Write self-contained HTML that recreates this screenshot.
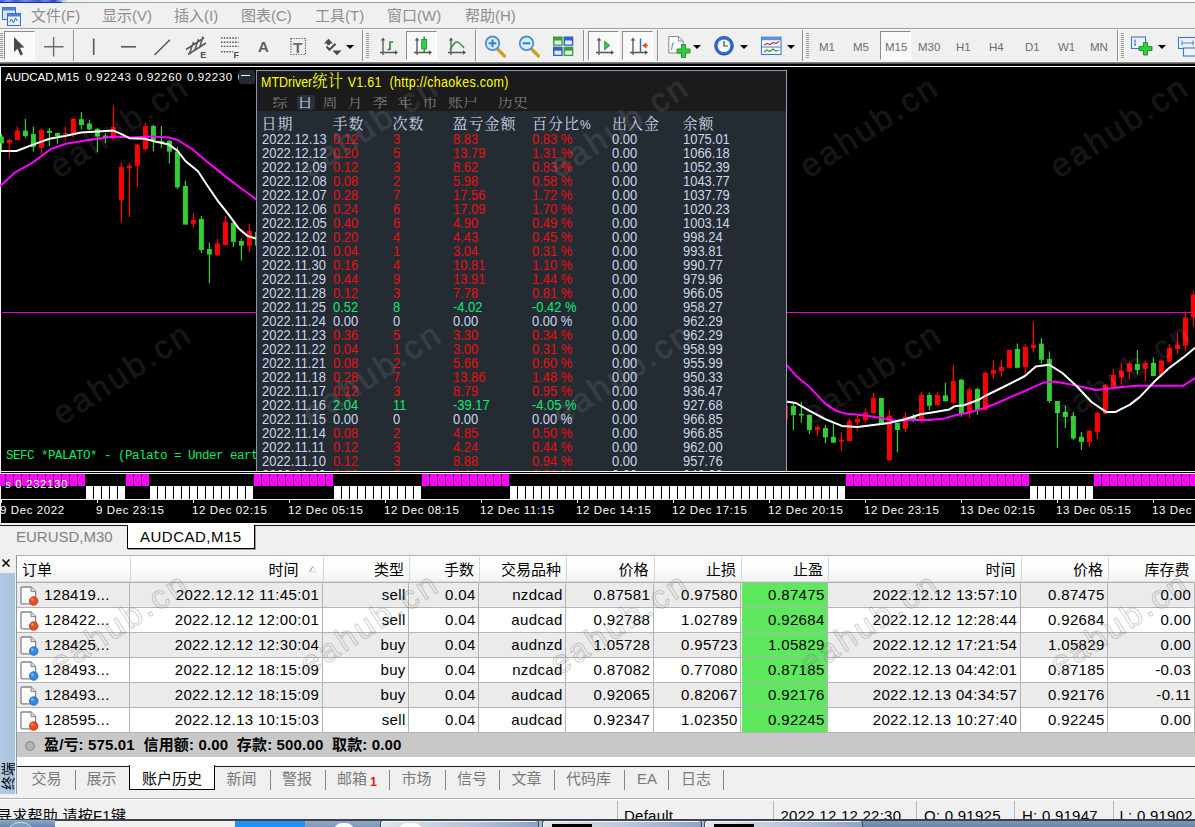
<!DOCTYPE html>
<html lang="zh-CN"><head><meta charset="utf-8"><title>MT4</title>
<style>
*{margin:0;padding:0;box-sizing:border-box}
html,body{width:1195px;height:827px;overflow:hidden;background:#f0f0f0}
body{position:relative;font-family:"Liberation Sans","Noto Sans CJK SC",sans-serif;color:#000}
.abs{position:absolute}
.ui{font-family:"Liberation Sans","Noto Sans CJK SC",sans-serif}
#titlestrip{left:0;top:0;width:1195px;height:3px;background:linear-gradient(90deg,#3a5ad4 0,#7d98ec 8px,#3c5cd6 16px,#6f8ce8 26px,#3a5ad4 38px,#6a88e6 46px,#2a46c4 54px,#a8c0f2 62px,#e6f5f9 68px,#f3fafc 200px,#f6fbfd)}
#menubar{left:0;top:3px;width:1195px;height:25px;background:#f0f0f0}
#menubar span{position:absolute;top:2px;font-size:15px;line-height:22px;color:#8e8e8e;white-space:nowrap}
#menuline{left:0;top:28px;width:1195px;height:1px;background:#a0a0a0}
#toolbar{left:0;top:29px;width:1195px;height:33px;background:#f0f0f0;box-shadow:inset 0 1px 0 #fafafa}
.tsep{position:absolute;top:1px;width:1px;height:31px;background:#8e8e8e;box-shadow:1px 0 0 #fbfbfb}
.grip{position:absolute;top:4px;width:3px;height:26px;background:repeating-linear-gradient(to bottom,#9a9a9a 0,#9a9a9a 1px,#f0f0f0 1px,#f0f0f0 2px)}
.pressed{position:absolute;top:2px;height:29px;background:#f9f9f9;border-top:1px solid #8c8c8c;border-left:1px solid #8c8c8c;border-right:1px solid #fff;border-bottom:1px solid #fff}
.tf{position:absolute;top:11px;font-size:11.5px;line-height:14px;color:#6e6e6e;white-space:nowrap}
.dd{position:absolute;top:16px;width:0;height:0;border-left:4px solid transparent;border-right:4px solid transparent;border-top:4px solid #000}
#tbshadow{left:0;top:62px;width:1195px;height:2px;background:linear-gradient(#9a9a9a,#404040)}
#chart{left:0;top:64px;width:1195px;height:459px;background:#000;overflow:hidden}
.wm{position:absolute;font-size:33px;line-height:34px;letter-spacing:2.9px;-webkit-text-stroke:.55px #fff;color:#fff;opacity:.088;transform:rotate(-33deg);transform-origin:left bottom;white-space:nowrap;font-family:"Liberation Sans",sans-serif;pointer-events:none}
.wml{position:absolute;font-size:33px;line-height:34px;letter-spacing:2.9px;color:transparent;-webkit-text-stroke:1.1px rgba(100,100,100,.3);transform:rotate(-33deg);transform-origin:left bottom;white-space:nowrap;font-family:"Liberation Sans",sans-serif;pointer-events:none}
.ct{font-family:"Liberation Sans",sans-serif;font-size:11.5px;line-height:14px;color:#fff;white-space:nowrap}.ls{letter-spacing:.6px}
#sefc{font-family:"Liberation Mono",monospace;font-size:12.5px;letter-spacing:-0.5px;line-height:16px;color:#00f064;white-space:nowrap}
#panel{left:256px;top:6px;width:531px;height:401px;background:#252b33;border-left:1px solid #8596b0;border-right:1px solid #8fa0b8;overflow:hidden;font-family:"Liberation Sans","Noto Serif CJK SC",sans-serif}
.cj{font-family:"Noto Serif CJK SC",serif;font-size:17px;line-height:18px;letter-spacing:.8px}
.ptitle{font-size:14px;line-height:18px;transform:scaleX(.89);transform-origin:left center;color:#ffff00;white-space:nowrap}
.ptab{position:absolute;top:-5.2px;font-family:"Noto Serif CJK SC",serif;font-size:15px;line-height:18px;color:#7c7c7c;white-space:nowrap}
.ptab.sel{color:#cfdcf2}
.phdr{position:absolute;top:43.6px;font-family:"Noto Serif CJK SC","Liberation Sans",serif;font-size:15px;letter-spacing:1px;line-height:18px;color:#c9d6ec;white-space:nowrap}
.prow{position:absolute;left:0;width:529px;height:14px}
.prow span{position:absolute;top:0;font-size:14px;line-height:14px;white-space:nowrap;transform:scaleX(.925);transform-origin:left center}
.prow .w{color:#c9d6ec}.prow .r{color:#e81010}.prow .g{color:#10e878}
#ctabs{left:0;top:523px;width:1195px;height:32px;background:#f0f0f0}
.ctab{top:4px;font-size:15px;line-height:20px;white-space:nowrap}
#term{left:0;top:555px;width:1195px;height:239px;background:#f0f0f0}
.vtxt{left:-6.5px;top:214px;width:28px;height:14px;font-size:14px;line-height:14px;color:#000;transform:rotate(-90deg);white-space:nowrap;text-align:center;overflow:hidden}
#tbl{left:16px;top:0;width:1179px;height:212px;background:#fff;border-top:1px solid #b0b0b0;overflow:hidden}
.thead{background:linear-gradient(#fff,#fff 40%,#f1f2f4);border-bottom:1px solid #dcdcdc}
.th{top:0;height:26px;line-height:27px;font-size:15px;text-align:right;padding-right:5px;white-space:nowrap;color:#000}
.trow{left:0;width:1179px;height:25px;border-bottom:1px solid #b4b4b4}
.td{top:0;height:24px;line-height:24px;font-size:15px;letter-spacing:.36px;text-align:right;padding-right:3.3px;white-space:nowrap;color:#000}
.sum{letter-spacing:.15px;font-size:15px;line-height:23px;font-weight:bold;white-space:nowrap;color:#000}
#btabs{left:16px;top:211px;width:1179px;height:28px;background:#f0f0f0}
.bt{top:3px;font-size:15px;line-height:20px;color:#7a7a7a;white-space:nowrap}
.bt.act{color:#000}
#status{left:0;top:794px;width:1195px;height:26px;background:#f0f0f0;overflow:hidden}
.st{top:12px;letter-spacing:.25px;font-size:15px;line-height:20px;white-space:nowrap;color:#000}
#taskbar{left:0;top:819px;width:1195px;height:8px;background:#a9bad2;overflow:hidden}
</style></head><body>
<div id="titlestrip" class="abs"><div class="abs" style="left:0;top:2px;width:62px;height:1px;background:#1e2e9e"></div><div class="abs" style="left:62px;top:2px;width:1133px;height:1px;background:#9e9e9e"></div></div><div id="menubar" class="abs"><svg class="abs" style="left:2px;top:2px" width="20" height="22" viewBox="0 0 20 22"><rect x="0.5" y="2.5" width="13" height="12" fill="#d8e6fa" stroke="#3a6cc4"/><rect x="0.5" y="2.5" width="13" height="3" fill="#4a82da"/><rect x="5.5" y="8.5" width="13" height="12" fill="#eaf2ff" stroke="#3a6cc4"/><rect x="5.5" y="8.5" width="13" height="3" fill="#4a82da"/><path d="M7.5 17 l2-3 2 4 2-5 2 3" fill="none" stroke="#3a6cc4" stroke-width="1"/></svg><span style="left:31px">文件(F)</span><span style="left:102px">显示(V)</span><span style="left:174px">插入(I)</span><span style="left:241px">图表(C)</span><span style="left:315px">工具(T)</span><span style="left:387px">窗口(W)</span><span style="left:465px">帮助(H)</span></div><div id="menuline" class="abs"></div><div id="toolbar" class="abs"><div class="grip" style="left:0px"></div><div class="grip" style="left:366px"></div><div class="grip" style="left:806px"></div><div class="grip" style="left:1121px"></div><div class="tsep" style="left:73px"></div><div class="tsep" style="left:362px"></div><div class="tsep" style="left:475px"></div><div class="tsep" style="left:583px"></div><div class="tsep" style="left:657px"></div><div class="tsep" style="left:802px"></div><div class="tsep" style="left:1117px"></div><div class="pressed" style="left:4px;width:31px"></div><div class="pressed" style="left:406px;width:31px"></div><div class="pressed" style="left:588px;width:31px"></div><div class="pressed" style="left:622px;width:31px"></div><div class="pressed" style="left:880px;width:31px"></div><div class="dd" style="left:346px"></div><div class="dd" style="left:693px"></div><div class="dd" style="left:740px"></div><div class="dd" style="left:787px"></div><div class="dd" style="left:1158px"></div><span class="tf" style="left:819px">M1</span><span class="tf" style="left:853px">M5</span><span class="tf" style="left:885px">M15</span><span class="tf" style="left:918px">M30</span><span class="tf" style="left:956px">H1</span><span class="tf" style="left:989px">H4</span><span class="tf" style="left:1025px">D1</span><span class="tf" style="left:1058px">W1</span><span class="tf" style="left:1090px">MN</span><svg class="abs" style="left:0;top:0" width="1195" height="33" viewBox="0 29 1195 33"><path d="M14 37 L14 52 L17.5 48.8 L20.5 55.5 L23 54.3 L20 47.8 L24.5 47.5 Z" fill="#4a4a4a"/><path d="M44 46.8 H63.5 M53.6 37 V56.5" stroke="#6c6c6c" stroke-width="1.4" fill="none"/><path d="M93.7 38.5 V55" stroke="#5a5a5a" stroke-width="1.6"/><path d="M121 46.8 H136" stroke="#5a5a5a" stroke-width="1.6"/><path d="M154.5 55 L170 39.8" stroke="#5a5a5a" stroke-width="1.6"/><path d="M186 49.5 L204 38 M188 54.5 L206 43 M189.5 53.5 L193.5 42 M194.5 51 L198.5 39 M199.5 48 L203 36.5" stroke="#5a5a5a" stroke-width="1.5" fill="none"/><text x="200.3" y="57.6" font-size="9" font-weight="bold" font-family="Liberation Sans,sans-serif" fill="#4a4a4a">E</text><path d="M221 38 H238.6" stroke="#5a5a5a" stroke-width="1.4" stroke-dasharray="1.6 1.2"/><path d="M221 42.2 H238.6" stroke="#5a5a5a" stroke-width="1.4" stroke-dasharray="1.6 1.2"/><path d="M221 46.4 H238.6" stroke="#5a5a5a" stroke-width="1.4" stroke-dasharray="1.6 1.2"/><path d="M221 51.8 H233" stroke="#5a5a5a" stroke-width="1.4" stroke-dasharray="1.6 1.2"/><text x="233.6" y="57.6" font-size="9" font-weight="bold" font-family="Liberation Sans,sans-serif" fill="#4a4a4a">F</text><text x="258" y="52.4" font-size="15" font-weight="bold" font-family="Liberation Sans,sans-serif" fill="#5e5e5e">A</text><rect x="291" y="38.5" width="14.5" height="16" fill="none" stroke="#5a5a5a" stroke-width="1.2" stroke-dasharray="1.3 1.3"/><text x="293" y="53" font-size="15.5" font-weight="bold" font-family="Liberation Sans,sans-serif" fill="#6a6a6a">T</text><path d="M324 43.5 L328.5 38.8 L333 43.5 H330 V45 H327 V43.5 Z M332.5 50.5 L337 55.2 L341.5 50.5 Z" fill="#4a4a4a"/><path d="M326.5 46.5 L329.5 49.8 L335.5 43.8" stroke="#4a4a4a" stroke-width="2" fill="none"/><path d="M383 39 V55 M380 52.5 H397" stroke="#555" stroke-width="1.3" fill="none"/><path d="M383 37.5 l-2.2 3 h4.4z M398 52.5 l-3 -2.2 v4.4z" fill="#555"/><path d="M390 41.5 V50 M390 42 H393 M387.5 49.5 H390" stroke="#1e8a2e" stroke-width="1.6" fill="none"/><path d="M417 39 V55 M414 52.5 H431" stroke="#555" stroke-width="1.3" fill="none"/><path d="M417 37.5 l-2.2 3 h4.4z M432 52.5 l-3 -2.2 v4.4z" fill="#555"/><path d="M424.2 36.5 V52" stroke="#1a7a2a" stroke-width="1.3"/><rect x="421.7" y="39.5" width="5" height="9.5" fill="#2fd14a" stroke="#1a8a2a" stroke-width="0.8"/><path d="M451 39 V55 M448 52.5 H465" stroke="#555" stroke-width="1.3" fill="none"/><path d="M451 37.5 l-2.2 3 h4.4z M466 52.5 l-3 -2.2 v4.4z" fill="#555"/><path d="M450 50 Q455 40 458.5 42.5 T464 48" stroke="#2a8a3a" stroke-width="1.4" fill="none"/><path d="M497.5 49 L504.5 56" stroke="#c9a227" stroke-width="3.2" stroke-linecap="round"/><circle cx="492.5" cy="43.3" r="6.8" fill="#d6ecff" stroke="#4f8fd6" stroke-width="1.8"/><path d="M488.7 43.3 H496.3" stroke="#3a78c8" stroke-width="2"/><path d="M492.5 39.5 V47.1" stroke="#3a78c8" stroke-width="2"/><path d="M531.5 49 L538.5 56" stroke="#c9a227" stroke-width="3.2" stroke-linecap="round"/><circle cx="526.5" cy="43.3" r="6.8" fill="#d6ecff" stroke="#4f8fd6" stroke-width="1.8"/><path d="M522.7 43.3 H530.3" stroke="#3a78c8" stroke-width="2"/><rect x="553" y="36.5" width="9.7" height="9.3" fill="#3aa12e"/><rect x="563.6" y="36.5" width="9.7" height="9.3" fill="#2f62c9"/><rect x="553" y="46.7" width="9.7" height="9.3" fill="#2f62c9"/><rect x="563.6" y="46.7" width="9.7" height="9.3" fill="#3aa12e"/><rect x="554.5" y="40.5" width="6.8" height="4" fill="#e8f0ff"/><rect x="565.1" y="40.5" width="6.8" height="4" fill="#e8f0ff"/><rect x="554.5" y="50.7" width="6.8" height="4" fill="#e8f0ff"/><rect x="565.1" y="50.7" width="6.8" height="4" fill="#e8f0ff"/><path d="M599 39 V55 M596 52.5 H613" stroke="#555" stroke-width="1.3" fill="none"/><path d="M599 37.5 l-2.2 3 h4.4z M614 52.5 l-3 -2.2 v4.4z" fill="#555"/><path d="M604.5 41 V50 L610 45.5 Z" fill="#35c24a" stroke="#1f8a30" stroke-width="0.6"/><path d="M633 39 V55 M630 52.5 H647" stroke="#555" stroke-width="1.3" fill="none"/><path d="M633 37.5 l-2.2 3 h4.4z M648 52.5 l-3 -2.2 v4.4z" fill="#555"/><path d="M640.5 38.5 V52" stroke="#1f6fb0" stroke-width="1.4"/><path d="M642 45.5 l4.5 -3 v6z" fill="#e04a1a"/><path d="M645 45.5 h3" stroke="#e04a1a" stroke-width="1.2"/><path d="M668.8 36.5 H678.5 L683.2 41 V53 H668.8 Z" fill="#fbfbfb" stroke="#8a8a8a" stroke-width="1"/><path d="M678.5 36.5 V41 H683.2" fill="none" stroke="#8a8a8a"/><text x="671" y="48" font-size="9" font-style="italic" font-family="Liberation Serif,serif" fill="#555">f</text><path d="M681.5 44.5 h4 v4.5 h4.5 v4 h-4.5 v4.5 h-4 v-4.5 h-4.5 v-4 h4.5z" fill="#2fcf3a" stroke="#1a8a22" stroke-width="0.9"/><circle cx="724" cy="45.8" r="9.3" fill="#2f6fd0" stroke="#1f4fa0" stroke-width="1"/><circle cx="724" cy="45.8" r="6.3" fill="#f4f8ff"/><path d="M724 41 V46 H728" stroke="#444" stroke-width="1.2" fill="none"/><rect x="761.5" y="37.2" width="19.5" height="17.3" fill="#f6f9ff" stroke="#3f78c8" stroke-width="1.1"/><rect x="761.5" y="37.2" width="19.5" height="3" fill="#5a90dc"/><path d="M761.5 47 H781" stroke="#3f78c8" stroke-width="1"/><path d="M764 45 l3 -1.5 3 1 3 -2 3 1 3 -2" stroke="#c0392b" stroke-width="1.2" fill="none"/><path d="M764 52 l3 -2 3 1.5 3 -2.5 3 2 3 -1" stroke="#2a9a3a" stroke-width="1.2" fill="none"/><rect x="1131.5" y="37" width="14" height="11.5" fill="#eef4ff" stroke="#3f78c8" stroke-width="1.1"/><path d="M1135 39.5 V46 M1134 41 h2 M1134 44.5 h2" stroke="#3f78c8" stroke-width="0.9"/><path d="M1143.5 42.5 h4 v4 h4.5 v4 h-4.5 v4.5 h-4 v-4.5 h-4.5 v-4 h4.5z" fill="#2fcf3a" stroke="#1a8a22" stroke-width="0.9"/><rect x="1178.5" y="37.5" width="18" height="11" fill="#eef4ff" stroke="#3f78c8" stroke-width="1.1"/><rect x="1183.5" y="48" width="14" height="8" fill="#eef4ff" stroke="#3f78c8" stroke-width="1.1"/><path d="M1182 43 h12 M1182 40.5 v5 M1193 40.5 v5" stroke="#3f78c8" stroke-width="0.9"/></svg></div><div id="tbshadow" class="abs"></div><div id="chart" class="abs"><svg class="abs" style="left:0;top:0" width="1195" height="459" viewBox="0 64 1195 459"><path d="M0 66.5 H1195 M0.5 66 V523" stroke="#f4f4f4" stroke-width="1" fill="none"/><path d="M2 312.5 H1195" stroke="#e000e0" stroke-width="1"/><path d="M1.4 134.0 V152.0" stroke="#32cd32" stroke-width="1.2"/><rect x="-1.1" y="136.5" width="5" height="6.8" fill="#32cd32"/><path d="M9.4 139.0 V158.0" stroke="#ff0000" stroke-width="1.2"/><rect x="6.9" y="140.0" width="5" height="3.0" fill="#ff0000"/><path d="M17.4 126.8 V140.0" stroke="#ff0000" stroke-width="1.2"/><rect x="14.9" y="130.6" width="5" height="9.4" fill="#ff0000"/><path d="M25.4 119.0 V137.5" stroke="#32cd32" stroke-width="1.2"/><rect x="22.9" y="130.6" width="5" height="5.4" fill="#32cd32"/><path d="M33.4 126.8 V151.7" stroke="#32cd32" stroke-width="1.2"/><rect x="30.9" y="134.0" width="5" height="13.0" fill="#32cd32"/><path d="M41.4 128.6 V153.5" stroke="#ff0000" stroke-width="1.2"/><rect x="38.9" y="130.0" width="5" height="18.0" fill="#ff0000"/><path d="M49.4 128.0 V146.0" stroke="#32cd32" stroke-width="1.2"/><rect x="46.9" y="130.6" width="5" height="2.4" fill="#32cd32"/><path d="M57.4 132.7 V143.8" stroke="#32cd32" stroke-width="1.2"/><rect x="54.9" y="133.0" width="5" height="3.0" fill="#32cd32"/><path d="M65.4 126.8 V140.8" stroke="#ff0000" stroke-width="1.2"/><rect x="62.9" y="133.0" width="5" height="1.0" fill="#ff0000"/><path d="M73.4 118.0 V137.5" stroke="#ff0000" stroke-width="1.2"/><rect x="70.9" y="118.7" width="5" height="15.7" fill="#ff0000"/><path d="M81.4 112.0 V129.4" stroke="#32cd32" stroke-width="1.2"/><rect x="78.9" y="119.2" width="5" height="5.8" fill="#32cd32"/><path d="M89.4 119.7 V130.6" stroke="#32cd32" stroke-width="1.2"/><rect x="86.9" y="123.5" width="5" height="5.9" fill="#32cd32"/><path d="M97.4 128.0 V152.0" stroke="#32cd32" stroke-width="1.2"/><rect x="94.9" y="128.9" width="5" height="7.6" fill="#32cd32"/><path d="M105.4 133.0 V143.0" stroke="#32cd32" stroke-width="1.2"/><rect x="102.9" y="135.5" width="5" height="1.5" fill="#32cd32"/><path d="M113.4 105.7 V139.5" stroke="#ff0000" stroke-width="1.2"/><rect x="110.9" y="126.8" width="5" height="11.4" fill="#ff0000"/><path d="M121.4 162.9 V222.0" stroke="#ff0000" stroke-width="1.2"/><rect x="118.9" y="167.0" width="5" height="33.0" fill="#ff0000"/><path d="M129.4 162.9 V217.0" stroke="#ff0000" stroke-width="1.2"/><rect x="126.9" y="165.7" width="5" height="2.3" fill="#ff0000"/><path d="M137.4 143.8 V187.0" stroke="#ff0000" stroke-width="1.2"/><rect x="134.9" y="144.6" width="5" height="21.1" fill="#ff0000"/><path d="M145.4 123.0 V151.0" stroke="#ff0000" stroke-width="1.2"/><rect x="142.9" y="126.0" width="5" height="23.0" fill="#ff0000"/><path d="M153.4 125.0 V151.0" stroke="#32cd32" stroke-width="1.2"/><rect x="150.9" y="126.0" width="5" height="14.3" fill="#32cd32"/><path d="M161.4 126.0 V148.0" stroke="#32cd32" stroke-width="1.2"/><rect x="158.9" y="140.8" width="5" height="1.8" fill="#32cd32"/><path d="M169.4 140.0 V163.6" stroke="#32cd32" stroke-width="1.2"/><rect x="166.9" y="140.8" width="5" height="10.9" fill="#32cd32"/><path d="M177.4 147.0 V189.0" stroke="#32cd32" stroke-width="1.2"/><rect x="174.9" y="151.7" width="5" height="35.6" fill="#32cd32"/><path d="M185.4 181.0 V224.6" stroke="#32cd32" stroke-width="1.2"/><rect x="182.9" y="186.0" width="5" height="38.6" fill="#32cd32"/><path d="M193.4 213.0 V228.0" stroke="#ff0000" stroke-width="1.2"/><rect x="190.9" y="220.0" width="5" height="3.8" fill="#ff0000"/><path d="M201.4 216.0 V253.0" stroke="#32cd32" stroke-width="1.2"/><rect x="198.9" y="219.0" width="5" height="31.0" fill="#32cd32"/><path d="M209.4 242.4 V283.0" stroke="#32cd32" stroke-width="1.2"/><rect x="206.9" y="249.0" width="5" height="5.5" fill="#32cd32"/><path d="M217.4 239.0 V256.0" stroke="#ff0000" stroke-width="1.2"/><rect x="214.9" y="243.6" width="5" height="11.4" fill="#ff0000"/><path d="M225.4 215.7 V245.4" stroke="#ff0000" stroke-width="1.2"/><rect x="222.9" y="222.0" width="5" height="23.0" fill="#ff0000"/><path d="M233.4 222.0 V247.0" stroke="#32cd32" stroke-width="1.2"/><rect x="230.9" y="222.8" width="5" height="19.1" fill="#32cd32"/><path d="M241.4 238.5 V260.6" stroke="#32cd32" stroke-width="1.2"/><rect x="238.9" y="241.0" width="5" height="4.7" fill="#32cd32"/><path d="M249.4 224.0 V252.5" stroke="#ff0000" stroke-width="1.2"/><rect x="246.9" y="231.0" width="5" height="14.7" fill="#ff0000"/><path d="M257.4 228.0 V252.0" stroke="#32cd32" stroke-width="1.2"/><rect x="254.9" y="232.0" width="5" height="13.7" fill="#32cd32"/><path d="M785.4 400.0 V424.0" stroke="#ff0000" stroke-width="1.2"/><rect x="782.9" y="405.8" width="5" height="14.0" fill="#ff0000"/><path d="M793.4 403.4 V430.0" stroke="#32cd32" stroke-width="1.2"/><rect x="790.9" y="405.8" width="5" height="9.2" fill="#32cd32"/><path d="M801.4 402.0 V422.8" stroke="#32cd32" stroke-width="1.2"/><rect x="798.9" y="413.8" width="5" height="1.7" fill="#32cd32"/><path d="M809.4 414.3 V434.0" stroke="#32cd32" stroke-width="1.2"/><rect x="806.9" y="415.0" width="5" height="15.0" fill="#32cd32"/><path d="M817.4 424.4 V436.0" stroke="#ff0000" stroke-width="1.2"/><rect x="814.9" y="426.9" width="5" height="3.1" fill="#ff0000"/><path d="M825.4 425.0 V443.3" stroke="#32cd32" stroke-width="1.2"/><rect x="822.9" y="428.0" width="5" height="9.3" fill="#32cd32"/><path d="M833.4 422.8 V443.3" stroke="#32cd32" stroke-width="1.2"/><rect x="830.9" y="436.8" width="5" height="5.8" fill="#32cd32"/><path d="M841.4 432.0 V451.0" stroke="#ff0000" stroke-width="1.2"/><rect x="838.9" y="439.7" width="5" height="1.9" fill="#ff0000"/><path d="M849.4 418.4 V441.0" stroke="#ff0000" stroke-width="1.2"/><rect x="846.9" y="421.0" width="5" height="20.0" fill="#ff0000"/><path d="M857.4 416.0 V431.2" stroke="#ff0000" stroke-width="1.2"/><rect x="854.9" y="419.0" width="5" height="3.3" fill="#ff0000"/><path d="M865.4 408.2 V422.8" stroke="#ff0000" stroke-width="1.2"/><rect x="862.9" y="412.4" width="5" height="7.9" fill="#ff0000"/><path d="M873.4 393.0 V413.6" stroke="#ff0000" stroke-width="1.2"/><rect x="870.9" y="398.0" width="5" height="15.0" fill="#ff0000"/><path d="M881.4 398.0 V424.4" stroke="#32cd32" stroke-width="1.2"/><rect x="878.9" y="398.0" width="5" height="26.4" fill="#32cd32"/><path d="M889.4 410.0 V460.3" stroke="#ff0000" stroke-width="1.2"/><rect x="886.9" y="415.5" width="5" height="44.8" fill="#ff0000"/><path d="M897.4 422.8 V452.3" stroke="#32cd32" stroke-width="1.2"/><rect x="894.9" y="422.8" width="5" height="7.2" fill="#32cd32"/><path d="M905.4 411.9 V432.0" stroke="#ff0000" stroke-width="1.2"/><rect x="902.9" y="416.7" width="5" height="12.1" fill="#ff0000"/><path d="M913.4 414.0 V422.0" stroke="#32cd32" stroke-width="1.2"/><rect x="910.9" y="417.0" width="5" height="2.0" fill="#32cd32"/><path d="M921.4 392.0 V422.8" stroke="#ff0000" stroke-width="1.2"/><rect x="918.9" y="395.0" width="5" height="25.3" fill="#ff0000"/><path d="M929.4 392.5 V410.0" stroke="#32cd32" stroke-width="1.2"/><rect x="926.9" y="395.0" width="5" height="10.8" fill="#32cd32"/><path d="M937.4 391.8 V405.8" stroke="#ff0000" stroke-width="1.2"/><rect x="934.9" y="395.0" width="5" height="10.0" fill="#ff0000"/><path d="M945.4 382.8 V401.7" stroke="#32cd32" stroke-width="1.2"/><rect x="942.9" y="395.4" width="5" height="5.6" fill="#32cd32"/><path d="M953.4 364.7 V404.0" stroke="#ff0000" stroke-width="1.2"/><rect x="950.9" y="381.0" width="5" height="21.7" fill="#ff0000"/><path d="M961.4 378.7 V416.7" stroke="#32cd32" stroke-width="1.2"/><rect x="958.9" y="379.7" width="5" height="34.6" fill="#32cd32"/><path d="M969.4 387.7 V418.0" stroke="#ff0000" stroke-width="1.2"/><rect x="966.9" y="389.6" width="5" height="23.0" fill="#ff0000"/><path d="M977.4 387.7 V414.8" stroke="#32cd32" stroke-width="1.2"/><rect x="974.9" y="388.9" width="5" height="21.1" fill="#32cd32"/><path d="M985.4 372.0 V410.7" stroke="#ff0000" stroke-width="1.2"/><rect x="982.9" y="372.7" width="5" height="37.3" fill="#ff0000"/><path d="M993.4 359.8 V379.0" stroke="#ff0000" stroke-width="1.2"/><rect x="990.9" y="370.0" width="5" height="3.9" fill="#ff0000"/><path d="M1001.4 359.8 V376.8" stroke="#ff0000" stroke-width="1.2"/><rect x="998.9" y="367.0" width="5" height="4.2" fill="#ff0000"/><path d="M1009.4 350.0 V367.8" stroke="#ff0000" stroke-width="1.2"/><rect x="1006.9" y="350.0" width="5" height="17.8" fill="#ff0000"/><path d="M1017.4 343.4 V368.3" stroke="#32cd32" stroke-width="1.2"/><rect x="1014.9" y="349.0" width="5" height="18.8" fill="#32cd32"/><path d="M1025.4 344.0 V374.8" stroke="#ff0000" stroke-width="1.2"/><rect x="1022.9" y="347.0" width="5" height="20.0" fill="#ff0000"/><path d="M1033.4 321.9 V352.6" stroke="#ff0000" stroke-width="1.2"/><rect x="1030.9" y="344.8" width="5" height="3.4" fill="#ff0000"/><path d="M1041.4 338.0 V363.5" stroke="#32cd32" stroke-width="1.2"/><rect x="1038.9" y="343.6" width="5" height="16.2" fill="#32cd32"/><path d="M1049.4 351.4 V403.0" stroke="#32cd32" stroke-width="1.2"/><rect x="1046.9" y="359.0" width="5" height="42.0" fill="#32cd32"/><path d="M1057.4 401.0 V448.0" stroke="#32cd32" stroke-width="1.2"/><rect x="1054.9" y="401.0" width="5" height="12.0" fill="#32cd32"/><path d="M1065.4 405.8 V428.0" stroke="#32cd32" stroke-width="1.2"/><rect x="1062.9" y="411.9" width="5" height="5.3" fill="#32cd32"/><path d="M1073.4 411.9 V440.0" stroke="#32cd32" stroke-width="1.2"/><rect x="1070.9" y="416.0" width="5" height="22.5" fill="#32cd32"/><path d="M1081.4 432.0 V449.9" stroke="#32cd32" stroke-width="1.2"/><rect x="1078.9" y="436.8" width="5" height="5.2" fill="#32cd32"/><path d="M1089.4 430.0 V447.0" stroke="#ff0000" stroke-width="1.2"/><rect x="1086.9" y="430.7" width="5" height="11.3" fill="#ff0000"/><path d="M1097.4 412.4 V439.0" stroke="#ff0000" stroke-width="1.2"/><rect x="1094.9" y="412.6" width="5" height="19.4" fill="#ff0000"/><path d="M1105.4 384.0 V414.3" stroke="#ff0000" stroke-width="1.2"/><rect x="1102.9" y="384.8" width="5" height="29.0" fill="#ff0000"/><path d="M1113.4 368.8 V387.7" stroke="#ff0000" stroke-width="1.2"/><rect x="1110.9" y="375.0" width="5" height="12.0" fill="#ff0000"/><path d="M1121.4 363.0 V384.5" stroke="#ff0000" stroke-width="1.2"/><rect x="1118.9" y="370.7" width="5" height="6.6" fill="#ff0000"/><path d="M1129.4 361.8 V379.2" stroke="#ff0000" stroke-width="1.2"/><rect x="1126.9" y="363.5" width="5" height="8.5" fill="#ff0000"/><path d="M1137.4 350.0 V374.4" stroke="#32cd32" stroke-width="1.2"/><rect x="1134.9" y="364.0" width="5" height="6.0" fill="#32cd32"/><path d="M1145.4 361.0 V381.0" stroke="#ff0000" stroke-width="1.2"/><rect x="1142.9" y="363.0" width="5" height="5.8" fill="#ff0000"/><path d="M1153.4 357.4 V376.3" stroke="#32cd32" stroke-width="1.2"/><rect x="1150.9" y="363.0" width="5" height="13.0" fill="#32cd32"/><path d="M1161.4 359.4 V376.8" stroke="#ff0000" stroke-width="1.2"/><rect x="1158.9" y="360.6" width="5" height="14.2" fill="#ff0000"/><path d="M1169.4 344.0 V362.7" stroke="#ff0000" stroke-width="1.2"/><rect x="1166.9" y="347.7" width="5" height="14.1" fill="#ff0000"/><path d="M1177.4 333.0 V354.0" stroke="#ff0000" stroke-width="1.2"/><rect x="1174.9" y="344.8" width="5" height="4.2" fill="#ff0000"/><path d="M1185.4 311.5 V351.0" stroke="#ff0000" stroke-width="1.2"/><rect x="1182.9" y="317.5" width="5" height="28.3" fill="#ff0000"/><path d="M1193.4 291.0 V326.0" stroke="#ff0000" stroke-width="1.2"/><rect x="1190.9" y="294.5" width="5" height="23.0" fill="#ff0000"/><path d="M0.0 186.0 L1.3 185.0 L15.0 172.5 L33.0 162.4 L50.8 149.0 L66.0 143.8 L83.8 140.8 L101.6 138.2 L114.0 136.5 L132.0 137.5 L152.0 136.5 L169.0 137.5 L177.8 140.0 L193.0 149.7 L208.0 162.4 L228.5 178.9 L243.8 190.3 L256.0 199.2 L262.0 204.0" stroke="#ff00ff" stroke-width="2" fill="none" stroke-linejoin="round"/><path d="M0.0 151.0 L16.5 151.0 L33.0 144.6 L49.5 138.8 L66.0 135.7 L81.0 132.4 L97.8 131.4 L113.5 130.6 L122.0 134.4 L129.5 138.2 L144.7 138.8 L155.0 141.5 L169.0 144.6 L177.8 151.0 L185.4 161.0 L198.0 171.3 L208.0 186.5 L218.4 201.7 L228.5 214.4 L238.7 228.4 L247.6 236.0 L256.0 238.6 L262.0 240.0" stroke="#ffffff" stroke-width="2" fill="none" stroke-linejoin="round"/><path d="M780.0 358.0 L787.4 365.9 L797.0 376.8 L809.0 386.5 L825.0 403.4 L835.8 410.7 L845.5 413.6 L864.8 415.5 L881.8 417.9 L896.3 420.8 L913.2 419.9 L930.0 419.9 L944.7 418.4 L954.4 415.5 L968.9 412.6 L983.4 408.2 L995.0 404.0 L1014.0 395.7 L1043.0 382.8 L1055.0 381.6 L1077.0 385.7 L1096.3 390.0 L1115.7 387.7 L1135.0 385.7 L1164.0 385.7 L1183.4 385.7 L1195.0 378.0" stroke="#ff00ff" stroke-width="2" fill="none" stroke-linejoin="round"/><path d="M780.0 401.0 L787.4 401.7 L795.9 403.0 L809.2 410.7 L825.0 419.0 L841.9 425.9 L857.6 426.9 L873.3 425.0 L889.0 423.0 L906.0 419.0 L920.5 414.3 L935.0 411.9 L949.5 409.4 L954.4 406.3 L964.0 405.3 L978.6 399.8 L985.0 396.0 L1004.4 386.5 L1025.0 376.0 L1035.8 366.4 L1049.0 364.7 L1062.4 373.0 L1077.0 386.5 L1091.5 402.0 L1106.0 411.9 L1115.7 411.9 L1130.0 404.6 L1139.9 396.9 L1154.4 381.6 L1168.9 368.3 L1183.4 357.4 L1195.0 347.7" stroke="#ffffff" stroke-width="2" fill="none" stroke-linejoin="round"/><path d="M0 471.5 H1195 M0 473.5 H1195" stroke="#f0f0f0" stroke-width="1"/><rect x="-2" y="474" width="7" height="12" fill="#ff00ff"/><rect x="6" y="474" width="7" height="12" fill="#ff00ff"/><rect x="14" y="474" width="7" height="12" fill="#ff00ff"/><rect x="22" y="474" width="7" height="12" fill="#ff00ff"/><rect x="30" y="474" width="7" height="12" fill="#ff00ff"/><rect x="38" y="474" width="7" height="12" fill="#ff00ff"/><rect x="46" y="474" width="7" height="12" fill="#ff00ff"/><rect x="54" y="474" width="7" height="12" fill="#ff00ff"/><rect x="62" y="474" width="7" height="12" fill="#ff00ff"/><rect x="70" y="474" width="7" height="12" fill="#ff00ff"/><rect x="78" y="474" width="7" height="12" fill="#ff00ff"/><rect x="126" y="474" width="7" height="12" fill="#ff00ff"/><rect x="134" y="474" width="7" height="12" fill="#ff00ff"/><rect x="142" y="474" width="7" height="12" fill="#ff00ff"/><rect x="254" y="474" width="7" height="12" fill="#ff00ff"/><rect x="262" y="474" width="7" height="12" fill="#ff00ff"/><rect x="270" y="474" width="7" height="12" fill="#ff00ff"/><rect x="278" y="474" width="7" height="12" fill="#ff00ff"/><rect x="286" y="474" width="7" height="12" fill="#ff00ff"/><rect x="294" y="474" width="7" height="12" fill="#ff00ff"/><rect x="302" y="474" width="7" height="12" fill="#ff00ff"/><rect x="310" y="474" width="7" height="12" fill="#ff00ff"/><rect x="318" y="474" width="7" height="12" fill="#ff00ff"/><rect x="326" y="474" width="7" height="12" fill="#ff00ff"/><rect x="422" y="474" width="7" height="12" fill="#ff00ff"/><rect x="430" y="474" width="7" height="12" fill="#ff00ff"/><rect x="438" y="474" width="7" height="12" fill="#ff00ff"/><rect x="446" y="474" width="7" height="12" fill="#ff00ff"/><rect x="454" y="474" width="7" height="12" fill="#ff00ff"/><rect x="462" y="474" width="7" height="12" fill="#ff00ff"/><rect x="470" y="474" width="7" height="12" fill="#ff00ff"/><rect x="478" y="474" width="7" height="12" fill="#ff00ff"/><rect x="486" y="474" width="7" height="12" fill="#ff00ff"/><rect x="494" y="474" width="7" height="12" fill="#ff00ff"/><rect x="502" y="474" width="7" height="12" fill="#ff00ff"/><rect x="846" y="474" width="7" height="12" fill="#ff00ff"/><rect x="854" y="474" width="7" height="12" fill="#ff00ff"/><rect x="862" y="474" width="7" height="12" fill="#ff00ff"/><rect x="870" y="474" width="7" height="12" fill="#ff00ff"/><rect x="878" y="474" width="7" height="12" fill="#ff00ff"/><rect x="886" y="474" width="7" height="12" fill="#ff00ff"/><rect x="894" y="474" width="7" height="12" fill="#ff00ff"/><rect x="902" y="474" width="7" height="12" fill="#ff00ff"/><rect x="910" y="474" width="7" height="12" fill="#ff00ff"/><rect x="918" y="474" width="7" height="12" fill="#ff00ff"/><rect x="926" y="474" width="7" height="12" fill="#ff00ff"/><rect x="934" y="474" width="7" height="12" fill="#ff00ff"/><rect x="942" y="474" width="7" height="12" fill="#ff00ff"/><rect x="950" y="474" width="7" height="12" fill="#ff00ff"/><rect x="958" y="474" width="7" height="12" fill="#ff00ff"/><rect x="966" y="474" width="7" height="12" fill="#ff00ff"/><rect x="974" y="474" width="7" height="12" fill="#ff00ff"/><rect x="982" y="474" width="7" height="12" fill="#ff00ff"/><rect x="990" y="474" width="7" height="12" fill="#ff00ff"/><rect x="998" y="474" width="7" height="12" fill="#ff00ff"/><rect x="1006" y="474" width="7" height="12" fill="#ff00ff"/><rect x="1014" y="474" width="7" height="12" fill="#ff00ff"/><rect x="1022" y="474" width="7" height="12" fill="#ff00ff"/><rect x="1094" y="474" width="7" height="12" fill="#ff00ff"/><rect x="1102" y="474" width="7" height="12" fill="#ff00ff"/><rect x="1110" y="474" width="7" height="12" fill="#ff00ff"/><rect x="1118" y="474" width="7" height="12" fill="#ff00ff"/><rect x="1126" y="474" width="7" height="12" fill="#ff00ff"/><rect x="1134" y="474" width="7" height="12" fill="#ff00ff"/><rect x="1142" y="474" width="7" height="12" fill="#ff00ff"/><rect x="1150" y="474" width="7" height="12" fill="#ff00ff"/><rect x="1158" y="474" width="7" height="12" fill="#ff00ff"/><rect x="1166" y="474" width="7" height="12" fill="#ff00ff"/><rect x="1174" y="474" width="7" height="12" fill="#ff00ff"/><rect x="1182" y="474" width="7" height="12" fill="#ff00ff"/><rect x="1190" y="474" width="7" height="12" fill="#ff00ff"/><rect x="86" y="486" width="7" height="13" fill="#ffffff"/><rect x="94" y="486" width="7" height="13" fill="#ffffff"/><rect x="102" y="486" width="7" height="13" fill="#ffffff"/><rect x="110" y="486" width="7" height="13" fill="#ffffff"/><rect x="118" y="486" width="7" height="13" fill="#ffffff"/><rect x="150" y="486" width="7" height="13" fill="#ffffff"/><rect x="158" y="486" width="7" height="13" fill="#ffffff"/><rect x="166" y="486" width="7" height="13" fill="#ffffff"/><rect x="174" y="486" width="7" height="13" fill="#ffffff"/><rect x="182" y="486" width="7" height="13" fill="#ffffff"/><rect x="190" y="486" width="7" height="13" fill="#ffffff"/><rect x="198" y="486" width="7" height="13" fill="#ffffff"/><rect x="206" y="486" width="7" height="13" fill="#ffffff"/><rect x="214" y="486" width="7" height="13" fill="#ffffff"/><rect x="222" y="486" width="7" height="13" fill="#ffffff"/><rect x="230" y="486" width="7" height="13" fill="#ffffff"/><rect x="238" y="486" width="7" height="13" fill="#ffffff"/><rect x="246" y="486" width="7" height="13" fill="#ffffff"/><rect x="334" y="486" width="7" height="13" fill="#ffffff"/><rect x="342" y="486" width="7" height="13" fill="#ffffff"/><rect x="350" y="486" width="7" height="13" fill="#ffffff"/><rect x="358" y="486" width="7" height="13" fill="#ffffff"/><rect x="366" y="486" width="7" height="13" fill="#ffffff"/><rect x="374" y="486" width="7" height="13" fill="#ffffff"/><rect x="382" y="486" width="7" height="13" fill="#ffffff"/><rect x="390" y="486" width="7" height="13" fill="#ffffff"/><rect x="398" y="486" width="7" height="13" fill="#ffffff"/><rect x="406" y="486" width="7" height="13" fill="#ffffff"/><rect x="414" y="486" width="7" height="13" fill="#ffffff"/><rect x="510" y="486" width="7" height="13" fill="#ffffff"/><rect x="518" y="486" width="7" height="13" fill="#ffffff"/><rect x="526" y="486" width="7" height="13" fill="#ffffff"/><rect x="534" y="486" width="7" height="13" fill="#ffffff"/><rect x="542" y="486" width="7" height="13" fill="#ffffff"/><rect x="550" y="486" width="7" height="13" fill="#ffffff"/><rect x="558" y="486" width="7" height="13" fill="#ffffff"/><rect x="566" y="486" width="7" height="13" fill="#ffffff"/><rect x="574" y="486" width="7" height="13" fill="#ffffff"/><rect x="582" y="486" width="7" height="13" fill="#ffffff"/><rect x="590" y="486" width="7" height="13" fill="#ffffff"/><rect x="598" y="486" width="7" height="13" fill="#ffffff"/><rect x="606" y="486" width="7" height="13" fill="#ffffff"/><rect x="614" y="486" width="7" height="13" fill="#ffffff"/><rect x="622" y="486" width="7" height="13" fill="#ffffff"/><rect x="630" y="486" width="7" height="13" fill="#ffffff"/><rect x="638" y="486" width="7" height="13" fill="#ffffff"/><rect x="646" y="486" width="7" height="13" fill="#ffffff"/><rect x="654" y="486" width="7" height="13" fill="#ffffff"/><rect x="662" y="486" width="7" height="13" fill="#ffffff"/><rect x="670" y="486" width="7" height="13" fill="#ffffff"/><rect x="678" y="486" width="7" height="13" fill="#ffffff"/><rect x="686" y="486" width="7" height="13" fill="#ffffff"/><rect x="694" y="486" width="7" height="13" fill="#ffffff"/><rect x="702" y="486" width="7" height="13" fill="#ffffff"/><rect x="710" y="486" width="7" height="13" fill="#ffffff"/><rect x="718" y="486" width="7" height="13" fill="#ffffff"/><rect x="726" y="486" width="7" height="13" fill="#ffffff"/><rect x="734" y="486" width="7" height="13" fill="#ffffff"/><rect x="742" y="486" width="7" height="13" fill="#ffffff"/><rect x="750" y="486" width="7" height="13" fill="#ffffff"/><rect x="758" y="486" width="7" height="13" fill="#ffffff"/><rect x="766" y="486" width="7" height="13" fill="#ffffff"/><rect x="774" y="486" width="7" height="13" fill="#ffffff"/><rect x="782" y="486" width="7" height="13" fill="#ffffff"/><rect x="790" y="486" width="7" height="13" fill="#ffffff"/><rect x="798" y="486" width="7" height="13" fill="#ffffff"/><rect x="806" y="486" width="7" height="13" fill="#ffffff"/><rect x="814" y="486" width="7" height="13" fill="#ffffff"/><rect x="822" y="486" width="7" height="13" fill="#ffffff"/><rect x="830" y="486" width="7" height="13" fill="#ffffff"/><rect x="838" y="486" width="7" height="13" fill="#ffffff"/><rect x="1030" y="486" width="7" height="13" fill="#ffffff"/><rect x="1038" y="486" width="7" height="13" fill="#ffffff"/><rect x="1046" y="486" width="7" height="13" fill="#ffffff"/><rect x="1054" y="486" width="7" height="13" fill="#ffffff"/><rect x="1062" y="486" width="7" height="13" fill="#ffffff"/><rect x="1070" y="486" width="7" height="13" fill="#ffffff"/><rect x="1078" y="486" width="7" height="13" fill="#ffffff"/><rect x="1086" y="486" width="7" height="13" fill="#ffffff"/><path d="M0 499.5 H1195" stroke="#f0f0f0" stroke-width="1"/><path d="M1.5 499 V503 M97.5 499 V503 M193.5 499 V503 M289.5 499 V503 M385.5 499 V503 M481.5 499 V503 M577.5 499 V503 M673.5 499 V503 M769.5 499 V503 M865.5 499 V503 M961.5 499 V503 M1057.5 499 V503 M1153.5 499 V503 " stroke="#f0f0f0" stroke-width="1"/></svg><div class="abs ct" style="left:5px;top:6px;width:234px;overflow:hidden">AUDCAD,M15&nbsp; <span style="letter-spacing:.62px;word-spacing:1px">0.92243 0.92260 0.92230 0.92243</span></div><div class="abs" style="left:239px;top:6px;width:16px;height:14px;background:#252b33;border-radius:2.5px"><div class="abs" style="left:2px;top:4.8px;width:9px;height:1.5px;background:#fff"></div></div><div class="abs" id="sefc" style="left:6px;top:384px;width:251px;overflow:hidden">SEFC *PALATO* - (Palato = Under earth)</div><div class="abs ct ls" style="left:5px;top:413px">s 0.232130</div><div class="abs ct ls" style="left:0px;top:439px">9 Dec 2022</div><div class="abs ct ls" style="left:96px;top:439px">9 Dec 23:15</div><div class="abs ct ls" style="left:192px;top:439px">12 Dec 02:15</div><div class="abs ct ls" style="left:288px;top:439px">12 Dec 05:15</div><div class="abs ct ls" style="left:384px;top:439px">12 Dec 08:15</div><div class="abs ct ls" style="left:480px;top:439px">12 Dec 11:15</div><div class="abs ct ls" style="left:576px;top:439px">12 Dec 14:15</div><div class="abs ct ls" style="left:672px;top:439px">12 Dec 17:15</div><div class="abs ct ls" style="left:768px;top:439px">12 Dec 20:15</div><div class="abs ct ls" style="left:864px;top:439px">12 Dec 23:15</div><div class="abs ct ls" style="left:960px;top:439px">13 Dec 02:15</div><div class="abs ct ls" style="left:1056px;top:439px">13 Dec 05:15</div><div class="abs ct ls" style="left:1152px;top:439px">13 Dec 08:15</div><div id="panel" class="abs"><div class="abs" style="left:0;top:0;width:529px;height:41px;background:#1b1b1b;border-top:1px solid #8596b0"></div><div class="abs ptitle" style="left:3.6px;top:1px">MTDriver<span class="cj">统计</span><span style="letter-spacing:.36px"> V1.61&nbsp; (http://chaokes.com)</span></div><div class="abs" style="left:40px;top:25px;width:18px;height:15px;background:#27303c;border-radius:3px"></div><div class="abs" style="left:0;top:27px;width:529px;height:14px;overflow:hidden"><span class="ptab" style="left:15.5px">综</span><span class="ptab sel" style="left:40.5px">日</span><span class="ptab" style="left:65.5px">周</span><span class="ptab" style="left:90.5px">月</span><span class="ptab" style="left:115.5px">季</span><span class="ptab" style="left:140.5px">年</span><span class="ptab" style="left:165.5px">币</span><span class="ptab" style="left:191px">账户</span><span class="ptab" style="left:241px">历史</span></div><span class="phdr" style="left:4.5px">日期</span><span class="phdr" style="left:75.5px">手数</span><span class="phdr" style="left:135.5px">次数</span><span class="phdr" style="left:195.5px">盈亏金额</span><span class="phdr" style="left:275px">百分比<span style="font-family:Liberation Sans,sans-serif;font-size:12px;letter-spacing:-1px">%</span></span><span class="phdr" style="left:355px">出入金</span><span class="phdr" style="left:425.5px">余额</span><div class="prow" style="top:62.3px"><span class="w" style="left:4.5px">2022.12.13</span><span class="r" style="left:75.5px">0.12</span><span class="r" style="left:135.5px">3</span><span class="r" style="left:195.5px">8.83</span><span class="r" style="left:275px">0.83 %</span><span class="w" style="left:355px">0.00</span><span class="w" style="left:425.5px">1075.01</span></div><div class="prow" style="top:76.3px"><span class="w" style="left:4.5px">2022.12.12</span><span class="r" style="left:75.5px">0.20</span><span class="r" style="left:135.5px">5</span><span class="r" style="left:195.5px">13.79</span><span class="r" style="left:275px">1.31 %</span><span class="w" style="left:355px">0.00</span><span class="w" style="left:425.5px">1066.18</span></div><div class="prow" style="top:90.3px"><span class="w" style="left:4.5px">2022.12.09</span><span class="r" style="left:75.5px">0.12</span><span class="r" style="left:135.5px">3</span><span class="r" style="left:195.5px">8.62</span><span class="r" style="left:275px">0.83 %</span><span class="w" style="left:355px">0.00</span><span class="w" style="left:425.5px">1052.39</span></div><div class="prow" style="top:104.3px"><span class="w" style="left:4.5px">2022.12.08</span><span class="r" style="left:75.5px">0.08</span><span class="r" style="left:135.5px">2</span><span class="r" style="left:195.5px">5.98</span><span class="r" style="left:275px">0.58 %</span><span class="w" style="left:355px">0.00</span><span class="w" style="left:425.5px">1043.77</span></div><div class="prow" style="top:118.3px"><span class="w" style="left:4.5px">2022.12.07</span><span class="r" style="left:75.5px">0.28</span><span class="r" style="left:135.5px">7</span><span class="r" style="left:195.5px">17.56</span><span class="r" style="left:275px">1.72 %</span><span class="w" style="left:355px">0.00</span><span class="w" style="left:425.5px">1037.79</span></div><div class="prow" style="top:132.3px"><span class="w" style="left:4.5px">2022.12.06</span><span class="r" style="left:75.5px">0.24</span><span class="r" style="left:135.5px">6</span><span class="r" style="left:195.5px">17.09</span><span class="r" style="left:275px">1.70 %</span><span class="w" style="left:355px">0.00</span><span class="w" style="left:425.5px">1020.23</span></div><div class="prow" style="top:146.3px"><span class="w" style="left:4.5px">2022.12.05</span><span class="r" style="left:75.5px">0.40</span><span class="r" style="left:135.5px">6</span><span class="r" style="left:195.5px">4.90</span><span class="r" style="left:275px">0.49 %</span><span class="w" style="left:355px">0.00</span><span class="w" style="left:425.5px">1003.14</span></div><div class="prow" style="top:160.3px"><span class="w" style="left:4.5px">2022.12.02</span><span class="r" style="left:75.5px">0.20</span><span class="r" style="left:135.5px">4</span><span class="r" style="left:195.5px">4.43</span><span class="r" style="left:275px">0.45 %</span><span class="w" style="left:355px">0.00</span><span class="w" style="left:425.5px">998.24</span></div><div class="prow" style="top:174.3px"><span class="w" style="left:4.5px">2022.12.01</span><span class="r" style="left:75.5px">0.04</span><span class="r" style="left:135.5px">1</span><span class="r" style="left:195.5px">3.04</span><span class="r" style="left:275px">0.31 %</span><span class="w" style="left:355px">0.00</span><span class="w" style="left:425.5px">993.81</span></div><div class="prow" style="top:188.3px"><span class="w" style="left:4.5px">2022.11.30</span><span class="r" style="left:75.5px">0.16</span><span class="r" style="left:135.5px">4</span><span class="r" style="left:195.5px">10.81</span><span class="r" style="left:275px">1.10 %</span><span class="w" style="left:355px">0.00</span><span class="w" style="left:425.5px">990.77</span></div><div class="prow" style="top:202.3px"><span class="w" style="left:4.5px">2022.11.29</span><span class="r" style="left:75.5px">0.44</span><span class="r" style="left:135.5px">9</span><span class="r" style="left:195.5px">13.91</span><span class="r" style="left:275px">1.44 %</span><span class="w" style="left:355px">0.00</span><span class="w" style="left:425.5px">979.96</span></div><div class="prow" style="top:216.3px"><span class="w" style="left:4.5px">2022.11.28</span><span class="r" style="left:75.5px">0.12</span><span class="r" style="left:135.5px">3</span><span class="r" style="left:195.5px">7.78</span><span class="r" style="left:275px">0.81 %</span><span class="w" style="left:355px">0.00</span><span class="w" style="left:425.5px">966.05</span></div><div class="prow" style="top:230.3px"><span class="w" style="left:4.5px">2022.11.25</span><span class="g" style="left:75.5px">0.52</span><span class="g" style="left:135.5px">8</span><span class="g" style="left:195.5px">-4.02</span><span class="g" style="left:275px">-0.42 %</span><span class="w" style="left:355px">0.00</span><span class="w" style="left:425.5px">958.27</span></div><div class="prow" style="top:244.3px"><span class="w" style="left:4.5px">2022.11.24</span><span class="w" style="left:75.5px">0.00</span><span class="w" style="left:135.5px">0</span><span class="w" style="left:195.5px">0.00</span><span class="w" style="left:275px">0.00 %</span><span class="w" style="left:355px">0.00</span><span class="w" style="left:425.5px">962.29</span></div><div class="prow" style="top:258.3px"><span class="w" style="left:4.5px">2022.11.23</span><span class="r" style="left:75.5px">0.36</span><span class="r" style="left:135.5px">5</span><span class="r" style="left:195.5px">3.30</span><span class="r" style="left:275px">0.34 %</span><span class="w" style="left:355px">0.00</span><span class="w" style="left:425.5px">962.29</span></div><div class="prow" style="top:272.3px"><span class="w" style="left:4.5px">2022.11.22</span><span class="r" style="left:75.5px">0.04</span><span class="r" style="left:135.5px">1</span><span class="r" style="left:195.5px">3.00</span><span class="r" style="left:275px">0.31 %</span><span class="w" style="left:355px">0.00</span><span class="w" style="left:425.5px">958.99</span></div><div class="prow" style="top:286.3px"><span class="w" style="left:4.5px">2022.11.21</span><span class="r" style="left:75.5px">0.08</span><span class="r" style="left:135.5px">2</span><span class="r" style="left:195.5px">5.66</span><span class="r" style="left:275px">0.60 %</span><span class="w" style="left:355px">0.00</span><span class="w" style="left:425.5px">955.99</span></div><div class="prow" style="top:300.3px"><span class="w" style="left:4.5px">2022.11.18</span><span class="r" style="left:75.5px">0.28</span><span class="r" style="left:135.5px">7</span><span class="r" style="left:195.5px">13.86</span><span class="r" style="left:275px">1.48 %</span><span class="w" style="left:355px">0.00</span><span class="w" style="left:425.5px">950.33</span></div><div class="prow" style="top:314.3px"><span class="w" style="left:4.5px">2022.11.17</span><span class="r" style="left:75.5px">0.12</span><span class="r" style="left:135.5px">3</span><span class="r" style="left:195.5px">8.79</span><span class="r" style="left:275px">0.95 %</span><span class="w" style="left:355px">0.00</span><span class="w" style="left:425.5px">936.47</span></div><div class="prow" style="top:328.3px"><span class="w" style="left:4.5px">2022.11.16</span><span class="g" style="left:75.5px">2.04</span><span class="g" style="left:135.5px">11</span><span class="g" style="left:195.5px">-39.17</span><span class="g" style="left:275px">-4.05 %</span><span class="w" style="left:355px">0.00</span><span class="w" style="left:425.5px">927.68</span></div><div class="prow" style="top:342.3px"><span class="w" style="left:4.5px">2022.11.15</span><span class="w" style="left:75.5px">0.00</span><span class="w" style="left:135.5px">0</span><span class="w" style="left:195.5px">0.00</span><span class="w" style="left:275px">0.00 %</span><span class="w" style="left:355px">0.00</span><span class="w" style="left:425.5px">966.85</span></div><div class="prow" style="top:356.3px"><span class="w" style="left:4.5px">2022.11.14</span><span class="r" style="left:75.5px">0.08</span><span class="r" style="left:135.5px">2</span><span class="r" style="left:195.5px">4.85</span><span class="r" style="left:275px">0.50 %</span><span class="w" style="left:355px">0.00</span><span class="w" style="left:425.5px">966.85</span></div><div class="prow" style="top:370.3px"><span class="w" style="left:4.5px">2022.11.11</span><span class="r" style="left:75.5px">0.12</span><span class="r" style="left:135.5px">3</span><span class="r" style="left:195.5px">4.24</span><span class="r" style="left:275px">0.44 %</span><span class="w" style="left:355px">0.00</span><span class="w" style="left:425.5px">962.00</span></div><div class="prow" style="top:384.3px"><span class="w" style="left:4.5px">2022.11.10</span><span class="r" style="left:75.5px">0.12</span><span class="r" style="left:135.5px">3</span><span class="r" style="left:195.5px">8.88</span><span class="r" style="left:275px">0.94 %</span><span class="w" style="left:355px">0.00</span><span class="w" style="left:425.5px">957.76</span></div><div class="prow" style="top:398.3px"><span class="w" style="left:4.5px">2022.11.09</span><span class="r" style="left:75.5px">0.20</span><span class="r" style="left:135.5px">5</span><span class="r" style="left:195.5px">9.12</span><span class="r" style="left:275px">0.96 %</span><span class="w" style="left:355px">0.00</span><span class="w" style="left:425.5px">948.88</span></div></div><div class="wm" style="left:62px;top:85.5px">eahub.cn</div><div class="wm" style="left:312px;top:85.5px">eahub.cn</div><div class="wm" style="left:562px;top:85.5px">eahub.cn</div><div class="wm" style="left:812px;top:85.5px">eahub.cn</div><div class="wm" style="left:1062px;top:85.5px">eahub.cn</div><div class="wm" style="left:65px;top:332.5px">eahub.cn</div><div class="wm" style="left:315px;top:332.5px">eahub.cn</div><div class="wm" style="left:565px;top:332.5px">eahub.cn</div><div class="wm" style="left:815px;top:332.5px">eahub.cn</div><div class="wm" style="left:1065px;top:332.5px">eahub.cn</div></div><div id="ctabs" class="abs"><div class="abs" style="left:0;top:2px;width:128px;height:1px;background:#1a1a1a"></div><div class="abs" style="left:255px;top:2px;width:940px;height:1px;background:#1a1a1a"></div><div class="abs" style="left:128px;top:0;width:126px;height:3px;background:#fff"></div><div class="abs" style="left:127px;top:2px;width:128px;height:24px;background:#fff;border:1px solid #000;border-top:none;box-shadow:1px 1px 0 #9a9a9a"></div><span class="abs ctab" style="left:16px;color:#808080">EURUSD,M30</span><span class="abs ctab" style="left:140px;color:#000;letter-spacing:.5px">AUDCAD,M15</span></div><div id="term" class="abs"><div class="abs" style="left:0;top:0;width:16px;height:18px;background:#f0f0f0"></div><svg class="abs" style="left:1px;top:3px" width="10" height="10" viewBox="0 0 10 10"><path d="M1.5 1.5 L8.5 8.5 M8.5 1.5 L1.5 8.5" stroke="#000" stroke-width="1.5"/></svg><div class="abs" style="left:0;top:18px;width:14.6px;height:221px;background:linear-gradient(90deg,#b3cae6,#a9c3e1)"></div><div class="abs" style="left:16px;top:0;width:1px;height:239px;background:#979797;z-index:3"></div><div class="abs vtxt">终端</div><div id="tbl" class="abs"><div class="abs thead" style="left:0;top:0;width:1179px;height:26px"></div><span class="abs th" style="left:0px;width:113.5px;text-align:left;padding-left:6px">订单</span><span class="abs th" style="left:113.5px;width:193.0px;padding-right:24px">时间</span><svg class="abs" style="left:291.5px;top:9px" width="10" height="8"><path d="M1.5 7 L4.8 1.5" stroke="#8a8a8a" stroke-width="1" fill="none"/><path d="M4.8 1.5 L8 7 H1.5" stroke="#dedede" stroke-width="1" fill="none"/></svg><div class="abs" style="left:113.5px;top:1px;width:1px;height:24px;background:#d5d5d5"></div><span class="abs th" style="left:306.5px;width:86.5px">类型</span><div class="abs" style="left:306.5px;top:1px;width:1px;height:24px;background:#d5d5d5"></div><span class="abs th" style="left:393px;width:70px">手数</span><div class="abs" style="left:393px;top:1px;width:1px;height:24px;background:#d5d5d5"></div><span class="abs th" style="left:463px;width:87px">交易品种</span><div class="abs" style="left:463px;top:1px;width:1px;height:24px;background:#d5d5d5"></div><span class="abs th" style="left:550px;width:87.5px">价格</span><div class="abs" style="left:550px;top:1px;width:1px;height:24px;background:#d5d5d5"></div><span class="abs th" style="left:637.5px;width:87.5px">止损</span><div class="abs" style="left:637.5px;top:1px;width:1px;height:24px;background:#d5d5d5"></div><span class="abs th" style="left:725px;width:87px">止盈</span><div class="abs" style="left:725px;top:1px;width:1px;height:24px;background:#d5d5d5"></div><span class="abs th" style="left:812px;width:192.5px">时间</span><div class="abs" style="left:812px;top:1px;width:1px;height:24px;background:#d5d5d5"></div><span class="abs th" style="left:1004.5px;width:87.5px">价格</span><div class="abs" style="left:1004.5px;top:1px;width:1px;height:24px;background:#d5d5d5"></div><span class="abs th" style="left:1092px;width:86.5px">库存费</span><div class="abs" style="left:1092px;top:1px;width:1px;height:24px;background:#d5d5d5"></div><div class="abs" style="left:0;top:26px;width:1179px;height:1px;background:#b0b0b0"></div><div class="abs trow" style="top:27px;background:#ebebeb"><svg class="abs" style="left:4px;top:3px" width="20" height="20" viewBox="0 0 20 20"><path d="M1 2.2 Q1 1 2.2 1 H11 L15.6 5.6 V16.6 Q15.6 17.8 14.4 17.8 H2.2 Q1 17.8 1 16.6 Z" fill="#fcfcfc" stroke="#858585" stroke-width="1.3"/><path d="M11 1 V5.6 H15.6" fill="#dcdcdc" stroke="#858585" stroke-width="1"/><circle cx="13.7" cy="15" r="4.3" fill="#ee4a1a" stroke="#b8380e" stroke-width=".8"/><circle cx="12.5" cy="13.6" r="1.4" fill="#fff" opacity=".4"/></svg><span class="abs td" style="left:0px;width:113.5px;text-align:left;padding-left:28px">128419...</span><span class="abs td" style="left:113.5px;width:193.0px">2022.12.12 11:45:01</span><div class="abs" style="left:112.5px;top:0;width:1px;height:25px;background:#b4b4b4"></div><span class="abs td" style="left:306.5px;width:86.5px">sell</span><div class="abs" style="left:305.5px;top:0;width:1px;height:25px;background:#b4b4b4"></div><span class="abs td" style="left:393px;width:70px">0.04</span><div class="abs" style="left:392px;top:0;width:1px;height:25px;background:#b4b4b4"></div><span class="abs td" style="left:463px;width:87px">nzdcad</span><div class="abs" style="left:462px;top:0;width:1px;height:25px;background:#b4b4b4"></div><span class="abs td" style="left:550px;width:87.5px">0.87581</span><div class="abs" style="left:549px;top:0;width:1px;height:25px;background:#b4b4b4"></div><span class="abs td" style="left:637.5px;width:87.5px">0.97580</span><div class="abs" style="left:636.5px;top:0;width:1px;height:25px;background:#b4b4b4"></div><div class="abs" style="left:726px;top:0;width:85px;height:24px;background:#5ee85e"></div><span class="abs td" style="left:725px;width:87px">0.87475</span><div class="abs" style="left:724px;top:0;width:1px;height:25px;background:#b4b4b4"></div><span class="abs td" style="left:812px;width:192.5px">2022.12.12 13:57:10</span><div class="abs" style="left:811px;top:0;width:1px;height:25px;background:#b4b4b4"></div><span class="abs td" style="left:1004.5px;width:87.5px">0.87475</span><div class="abs" style="left:1003.5px;top:0;width:1px;height:25px;background:#b4b4b4"></div><span class="abs td" style="left:1092px;width:86.5px">0.00</span><div class="abs" style="left:1091px;top:0;width:1px;height:25px;background:#b4b4b4"></div></div><div class="abs trow" style="top:52px;background:#ffffff"><svg class="abs" style="left:4px;top:3px" width="20" height="20" viewBox="0 0 20 20"><path d="M1 2.2 Q1 1 2.2 1 H11 L15.6 5.6 V16.6 Q15.6 17.8 14.4 17.8 H2.2 Q1 17.8 1 16.6 Z" fill="#fcfcfc" stroke="#858585" stroke-width="1.3"/><path d="M11 1 V5.6 H15.6" fill="#dcdcdc" stroke="#858585" stroke-width="1"/><circle cx="13.7" cy="15" r="4.3" fill="#ee4a1a" stroke="#b8380e" stroke-width=".8"/><circle cx="12.5" cy="13.6" r="1.4" fill="#fff" opacity=".4"/></svg><span class="abs td" style="left:0px;width:113.5px;text-align:left;padding-left:28px">128422...</span><span class="abs td" style="left:113.5px;width:193.0px">2022.12.12 12:00:01</span><div class="abs" style="left:112.5px;top:0;width:1px;height:25px;background:#b4b4b4"></div><span class="abs td" style="left:306.5px;width:86.5px">sell</span><div class="abs" style="left:305.5px;top:0;width:1px;height:25px;background:#b4b4b4"></div><span class="abs td" style="left:393px;width:70px">0.04</span><div class="abs" style="left:392px;top:0;width:1px;height:25px;background:#b4b4b4"></div><span class="abs td" style="left:463px;width:87px">audcad</span><div class="abs" style="left:462px;top:0;width:1px;height:25px;background:#b4b4b4"></div><span class="abs td" style="left:550px;width:87.5px">0.92788</span><div class="abs" style="left:549px;top:0;width:1px;height:25px;background:#b4b4b4"></div><span class="abs td" style="left:637.5px;width:87.5px">1.02789</span><div class="abs" style="left:636.5px;top:0;width:1px;height:25px;background:#b4b4b4"></div><div class="abs" style="left:726px;top:0;width:85px;height:24px;background:#5ee85e"></div><span class="abs td" style="left:725px;width:87px">0.92684</span><div class="abs" style="left:724px;top:0;width:1px;height:25px;background:#b4b4b4"></div><span class="abs td" style="left:812px;width:192.5px">2022.12.12 12:28:44</span><div class="abs" style="left:811px;top:0;width:1px;height:25px;background:#b4b4b4"></div><span class="abs td" style="left:1004.5px;width:87.5px">0.92684</span><div class="abs" style="left:1003.5px;top:0;width:1px;height:25px;background:#b4b4b4"></div><span class="abs td" style="left:1092px;width:86.5px">0.00</span><div class="abs" style="left:1091px;top:0;width:1px;height:25px;background:#b4b4b4"></div></div><div class="abs trow" style="top:77px;background:#ebebeb"><svg class="abs" style="left:4px;top:3px" width="20" height="20" viewBox="0 0 20 20"><path d="M1 2.2 Q1 1 2.2 1 H11 L15.6 5.6 V16.6 Q15.6 17.8 14.4 17.8 H2.2 Q1 17.8 1 16.6 Z" fill="#fcfcfc" stroke="#858585" stroke-width="1.3"/><path d="M11 1 V5.6 H15.6" fill="#dcdcdc" stroke="#858585" stroke-width="1"/><circle cx="13.7" cy="15" r="4.3" fill="#2f8ae8" stroke="#1f62b0" stroke-width=".8"/><circle cx="12.5" cy="13.6" r="1.4" fill="#fff" opacity=".4"/></svg><span class="abs td" style="left:0px;width:113.5px;text-align:left;padding-left:28px">128425...</span><span class="abs td" style="left:113.5px;width:193.0px">2022.12.12 12:30:04</span><div class="abs" style="left:112.5px;top:0;width:1px;height:25px;background:#b4b4b4"></div><span class="abs td" style="left:306.5px;width:86.5px">buy</span><div class="abs" style="left:305.5px;top:0;width:1px;height:25px;background:#b4b4b4"></div><span class="abs td" style="left:393px;width:70px">0.04</span><div class="abs" style="left:392px;top:0;width:1px;height:25px;background:#b4b4b4"></div><span class="abs td" style="left:463px;width:87px">audnzd</span><div class="abs" style="left:462px;top:0;width:1px;height:25px;background:#b4b4b4"></div><span class="abs td" style="left:550px;width:87.5px">1.05728</span><div class="abs" style="left:549px;top:0;width:1px;height:25px;background:#b4b4b4"></div><span class="abs td" style="left:637.5px;width:87.5px">0.95723</span><div class="abs" style="left:636.5px;top:0;width:1px;height:25px;background:#b4b4b4"></div><div class="abs" style="left:726px;top:0;width:85px;height:24px;background:#5ee85e"></div><span class="abs td" style="left:725px;width:87px">1.05829</span><div class="abs" style="left:724px;top:0;width:1px;height:25px;background:#b4b4b4"></div><span class="abs td" style="left:812px;width:192.5px">2022.12.12 17:21:54</span><div class="abs" style="left:811px;top:0;width:1px;height:25px;background:#b4b4b4"></div><span class="abs td" style="left:1004.5px;width:87.5px">1.05829</span><div class="abs" style="left:1003.5px;top:0;width:1px;height:25px;background:#b4b4b4"></div><span class="abs td" style="left:1092px;width:86.5px">0.00</span><div class="abs" style="left:1091px;top:0;width:1px;height:25px;background:#b4b4b4"></div></div><div class="abs trow" style="top:102px;background:#ffffff"><svg class="abs" style="left:4px;top:3px" width="20" height="20" viewBox="0 0 20 20"><path d="M1 2.2 Q1 1 2.2 1 H11 L15.6 5.6 V16.6 Q15.6 17.8 14.4 17.8 H2.2 Q1 17.8 1 16.6 Z" fill="#fcfcfc" stroke="#858585" stroke-width="1.3"/><path d="M11 1 V5.6 H15.6" fill="#dcdcdc" stroke="#858585" stroke-width="1"/><circle cx="13.7" cy="15" r="4.3" fill="#2f8ae8" stroke="#1f62b0" stroke-width=".8"/><circle cx="12.5" cy="13.6" r="1.4" fill="#fff" opacity=".4"/></svg><span class="abs td" style="left:0px;width:113.5px;text-align:left;padding-left:28px">128493...</span><span class="abs td" style="left:113.5px;width:193.0px">2022.12.12 18:15:09</span><div class="abs" style="left:112.5px;top:0;width:1px;height:25px;background:#b4b4b4"></div><span class="abs td" style="left:306.5px;width:86.5px">buy</span><div class="abs" style="left:305.5px;top:0;width:1px;height:25px;background:#b4b4b4"></div><span class="abs td" style="left:393px;width:70px">0.04</span><div class="abs" style="left:392px;top:0;width:1px;height:25px;background:#b4b4b4"></div><span class="abs td" style="left:463px;width:87px">nzdcad</span><div class="abs" style="left:462px;top:0;width:1px;height:25px;background:#b4b4b4"></div><span class="abs td" style="left:550px;width:87.5px">0.87082</span><div class="abs" style="left:549px;top:0;width:1px;height:25px;background:#b4b4b4"></div><span class="abs td" style="left:637.5px;width:87.5px">0.77080</span><div class="abs" style="left:636.5px;top:0;width:1px;height:25px;background:#b4b4b4"></div><div class="abs" style="left:726px;top:0;width:85px;height:24px;background:#5ee85e"></div><span class="abs td" style="left:725px;width:87px">0.87185</span><div class="abs" style="left:724px;top:0;width:1px;height:25px;background:#b4b4b4"></div><span class="abs td" style="left:812px;width:192.5px">2022.12.13 04:42:01</span><div class="abs" style="left:811px;top:0;width:1px;height:25px;background:#b4b4b4"></div><span class="abs td" style="left:1004.5px;width:87.5px">0.87185</span><div class="abs" style="left:1003.5px;top:0;width:1px;height:25px;background:#b4b4b4"></div><span class="abs td" style="left:1092px;width:86.5px">-0.03</span><div class="abs" style="left:1091px;top:0;width:1px;height:25px;background:#b4b4b4"></div></div><div class="abs trow" style="top:127px;background:#ebebeb"><svg class="abs" style="left:4px;top:3px" width="20" height="20" viewBox="0 0 20 20"><path d="M1 2.2 Q1 1 2.2 1 H11 L15.6 5.6 V16.6 Q15.6 17.8 14.4 17.8 H2.2 Q1 17.8 1 16.6 Z" fill="#fcfcfc" stroke="#858585" stroke-width="1.3"/><path d="M11 1 V5.6 H15.6" fill="#dcdcdc" stroke="#858585" stroke-width="1"/><circle cx="13.7" cy="15" r="4.3" fill="#2f8ae8" stroke="#1f62b0" stroke-width=".8"/><circle cx="12.5" cy="13.6" r="1.4" fill="#fff" opacity=".4"/></svg><span class="abs td" style="left:0px;width:113.5px;text-align:left;padding-left:28px">128493...</span><span class="abs td" style="left:113.5px;width:193.0px">2022.12.12 18:15:09</span><div class="abs" style="left:112.5px;top:0;width:1px;height:25px;background:#b4b4b4"></div><span class="abs td" style="left:306.5px;width:86.5px">buy</span><div class="abs" style="left:305.5px;top:0;width:1px;height:25px;background:#b4b4b4"></div><span class="abs td" style="left:393px;width:70px">0.04</span><div class="abs" style="left:392px;top:0;width:1px;height:25px;background:#b4b4b4"></div><span class="abs td" style="left:463px;width:87px">audcad</span><div class="abs" style="left:462px;top:0;width:1px;height:25px;background:#b4b4b4"></div><span class="abs td" style="left:550px;width:87.5px">0.92065</span><div class="abs" style="left:549px;top:0;width:1px;height:25px;background:#b4b4b4"></div><span class="abs td" style="left:637.5px;width:87.5px">0.82067</span><div class="abs" style="left:636.5px;top:0;width:1px;height:25px;background:#b4b4b4"></div><div class="abs" style="left:726px;top:0;width:85px;height:24px;background:#5ee85e"></div><span class="abs td" style="left:725px;width:87px">0.92176</span><div class="abs" style="left:724px;top:0;width:1px;height:25px;background:#b4b4b4"></div><span class="abs td" style="left:812px;width:192.5px">2022.12.13 04:34:57</span><div class="abs" style="left:811px;top:0;width:1px;height:25px;background:#b4b4b4"></div><span class="abs td" style="left:1004.5px;width:87.5px">0.92176</span><div class="abs" style="left:1003.5px;top:0;width:1px;height:25px;background:#b4b4b4"></div><span class="abs td" style="left:1092px;width:86.5px">-0.11</span><div class="abs" style="left:1091px;top:0;width:1px;height:25px;background:#b4b4b4"></div></div><div class="abs trow" style="top:152px;background:#ffffff"><svg class="abs" style="left:4px;top:3px" width="20" height="20" viewBox="0 0 20 20"><path d="M1 2.2 Q1 1 2.2 1 H11 L15.6 5.6 V16.6 Q15.6 17.8 14.4 17.8 H2.2 Q1 17.8 1 16.6 Z" fill="#fcfcfc" stroke="#858585" stroke-width="1.3"/><path d="M11 1 V5.6 H15.6" fill="#dcdcdc" stroke="#858585" stroke-width="1"/><circle cx="13.7" cy="15" r="4.3" fill="#ee4a1a" stroke="#b8380e" stroke-width=".8"/><circle cx="12.5" cy="13.6" r="1.4" fill="#fff" opacity=".4"/></svg><span class="abs td" style="left:0px;width:113.5px;text-align:left;padding-left:28px">128595...</span><span class="abs td" style="left:113.5px;width:193.0px">2022.12.13 10:15:03</span><div class="abs" style="left:112.5px;top:0;width:1px;height:25px;background:#b4b4b4"></div><span class="abs td" style="left:306.5px;width:86.5px">sell</span><div class="abs" style="left:305.5px;top:0;width:1px;height:25px;background:#b4b4b4"></div><span class="abs td" style="left:393px;width:70px">0.04</span><div class="abs" style="left:392px;top:0;width:1px;height:25px;background:#b4b4b4"></div><span class="abs td" style="left:463px;width:87px">audcad</span><div class="abs" style="left:462px;top:0;width:1px;height:25px;background:#b4b4b4"></div><span class="abs td" style="left:550px;width:87.5px">0.92347</span><div class="abs" style="left:549px;top:0;width:1px;height:25px;background:#b4b4b4"></div><span class="abs td" style="left:637.5px;width:87.5px">1.02350</span><div class="abs" style="left:636.5px;top:0;width:1px;height:25px;background:#b4b4b4"></div><div class="abs" style="left:726px;top:0;width:85px;height:24px;background:#5ee85e"></div><span class="abs td" style="left:725px;width:87px">0.92245</span><div class="abs" style="left:724px;top:0;width:1px;height:25px;background:#b4b4b4"></div><span class="abs td" style="left:812px;width:192.5px">2022.12.13 10:27:40</span><div class="abs" style="left:811px;top:0;width:1px;height:25px;background:#b4b4b4"></div><span class="abs td" style="left:1004.5px;width:87.5px">0.92245</span><div class="abs" style="left:1003.5px;top:0;width:1px;height:25px;background:#b4b4b4"></div><span class="abs td" style="left:1092px;width:86.5px">0.00</span><div class="abs" style="left:1091px;top:0;width:1px;height:25px;background:#b4b4b4"></div></div><div class="abs" style="left:1178px;top:26px;width:1px;height:151px;background:#b4b4b4"></div><div class="abs" style="left:0;top:177px;width:1179px;height:24px;background:#c8c8c8"><svg class="abs" style="left:8px;top:7px" width="12" height="12"><circle cx="6" cy="6" r="4.3" fill="#b4b4b4" stroke="#8c8c8c" stroke-width="1.2"/></svg><span class="abs sum" style="left:28px;top:0">盈/亏: 575.01&nbsp; 信用额: 0.00&nbsp; 存款: 500.00&nbsp; 取款: 0.00</span></div></div><div id="btabs" class="abs"><div class="abs" style="left:0;top:0;width:114px;height:1px;background:#1a1a1a"></div><div class="abs" style="left:198px;top:0;width:990px;height:1px;background:#1a1a1a"></div><div class="abs" style="left:113px;top:-1px;width:86px;height:25px;background:#fff;border:1px solid #000;border-top:none"></div><span class="abs bt" style="left:15.5px">交易</span><span class="abs bt" style="left:70.5px">展示</span><span class="abs bt act" style="left:126px">账户历史</span><span class="abs bt" style="left:210.5px">新闻</span><span class="abs bt" style="left:266px">警报</span><span class="abs bt" style="left:321px">邮箱</span><span class="abs bt" style="left:385.5px">市场</span><span class="abs bt" style="left:441px">信号</span><span class="abs bt" style="left:495.5px">文章</span><span class="abs bt" style="left:550px">代码库</span><span class="abs bt" style="left:621px">EA</span><span class="abs bt" style="left:665px">日志</span><span class="abs" style="left:354px;top:9px;font-size:12.5px;line-height:14px;font-weight:bold;color:#e81818">1</span><div class="abs" style="left:58.5px;top:4px;width:1px;height:20px;background:#858585"></div><div class="abs" style="left:253.5px;top:4px;width:1px;height:20px;background:#858585"></div><div class="abs" style="left:308.5px;top:4px;width:1px;height:20px;background:#858585"></div><div class="abs" style="left:373px;top:4px;width:1px;height:20px;background:#858585"></div><div class="abs" style="left:428.5px;top:4px;width:1px;height:20px;background:#858585"></div><div class="abs" style="left:483px;top:4px;width:1px;height:20px;background:#858585"></div><div class="abs" style="left:538px;top:4px;width:1px;height:20px;background:#858585"></div><div class="abs" style="left:608px;top:4px;width:1px;height:20px;background:#858585"></div><div class="abs" style="left:652px;top:4px;width:1px;height:20px;background:#858585"></div><div class="abs" style="left:707px;top:4px;width:1px;height:20px;background:#858585"></div></div></div><div class="wml" style="left:62px;top:647px">eahub.cn</div><div class="wml" style="left:312px;top:647px">eahub.cn</div><div class="wml" style="left:562px;top:647px">eahub.cn</div><div class="wml" style="left:812px;top:647px">eahub.cn</div><div class="wml" style="left:1062px;top:647px">eahub.cn</div><div id="status" class="abs"><div class="abs" style="left:0;top:4px;width:1195px;height:1px;background:#b4b4b4"></div><div class="abs" style="left:0;top:5px;width:1195px;height:1px;background:#fff"></div><span class="abs st" style="left:-3px">寻求帮助,请按F1键</span><span class="abs st" style="left:624px">Default</span><span class="abs st" style="left:780.5px">2022.12.12 22:30</span><span class="abs st" style="left:924px">O: 0.91925</span><span class="abs st" style="left:1022px">H: 0.91947</span><span class="abs st" style="left:1119.5px">L: 0.91902</span><div class="abs" style="left:617px;top:7px;width:1px;height:20px;background:#b8b8b8"></div><div class="abs" style="left:773px;top:7px;width:1px;height:20px;background:#b8b8b8"></div><div class="abs" style="left:916px;top:7px;width:1px;height:20px;background:#b8b8b8"></div><div class="abs" style="left:1014px;top:7px;width:1px;height:20px;background:#b8b8b8"></div><div class="abs" style="left:1113px;top:7px;width:1px;height:20px;background:#b8b8b8"></div></div><div id="taskbar" class="abs"><div class="abs" style="left:0;top:0;width:1195px;height:1.5px;background:#39424f"></div><div class="abs" style="left:0;top:1px;width:55px;height:7px;background:linear-gradient(#8ea8c8,#6584aa)"></div><div class="abs" style="left:7px;top:2.5px;width:27px;height:24px;border-radius:14px;background:#7d9cc2;border:1.3px solid #cfe0f2"></div><div class="abs" style="left:55px;top:1.5px;width:180px;height:7px;background:#f1f1f1"></div><div class="abs" style="left:235px;top:1.5px;width:70px;height:7px;background:#1e90ff"></div><div class="abs" style="left:305px;top:1.5px;width:75px;height:7px;background:linear-gradient(#93a8c2,#7b94b3)"></div><div class="abs" style="left:334px;top:4px;width:20px;height:16px;border-radius:10px;background:#fafcfe"></div><div class="abs" style="left:380px;top:1px;width:159px;height:9px;background:linear-gradient(90deg,#dfe6ef,#b4c2d6 60%,#8fa4c0);border:1px solid #3c4656;border-radius:3px 3px 0 0;box-shadow:inset 1px 1px 0 #f4f8fc"><div class="abs" style="left:18px;top:2px;width:23px;height:16px;border-radius:11px;background:#fafcfe"></div></div><div class="abs" style="left:542px;top:1px;width:160px;height:9px;background:linear-gradient(90deg,#dfe6ef,#b4c2d6 60%,#8fa4c0);border:1px solid #3c4656;border-radius:3px 3px 0 0;box-shadow:inset 1px 1px 0 #f4f8fc"><div class="abs" style="left:9px;top:3px;width:40px;height:6px;background:#000"></div></div><div class="abs" style="left:704px;top:1px;width:159px;height:9px;background:linear-gradient(90deg,#dfe6ef,#b4c2d6 60%,#8fa4c0);border:1px solid #3c4656;border-radius:3px 3px 0 0;box-shadow:inset 1px 1px 0 #f4f8fc"><div class="abs" style="left:9px;top:3px;width:40px;height:6px;background:#000"></div></div><div class="abs" style="left:863px;top:1.5px;width:332px;height:7px;background:linear-gradient(#7e97b8,#6481a6)"></div></div></body></html>
